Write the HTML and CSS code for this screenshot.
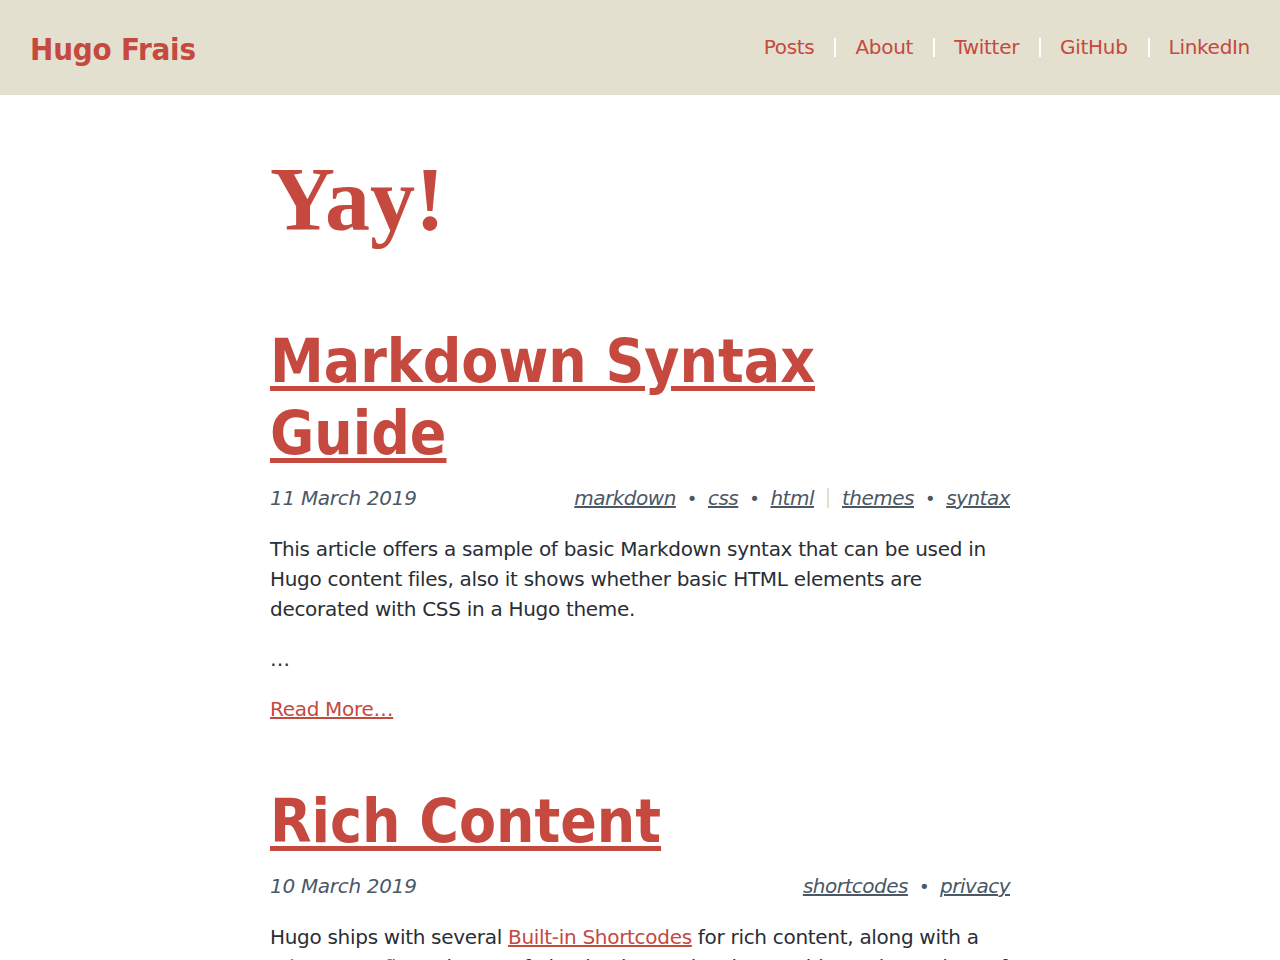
FILE: index.html
```html
<!DOCTYPE html>
<html lang="en">
<head>
<meta charset="utf-8">
<title>Hugo Frais</title>
<link rel="stylesheet" href="styles.css">
</head>
<body>
<header class="site-header">
  <a class="brand" href="#">Hugo Frais</a>
  <nav class="nav">
    <a href="#">Posts</a><span class="sep"></span>
    <a href="#">About</a><span class="sep"></span>
    <a href="#">Twitter</a><span class="sep"></span>
    <a href="#">GitHub</a><span class="sep"></span>
    <a href="#">LinkedIn</a>
  </nav>
</header>
<main class="main">
  <h1 class="page-title">Yay!</h1>

  <article class="post">
    <h2 class="post-title"><a href="#">Markdown Syntax Guide</a></h2>
    <div class="meta">
      <span class="date">11 March 2019</span>
      <span class="tags">
        <a href="#">markdown</a><span class="dot">•</span><a href="#">css</a><span class="dot">•</span><a href="#">html</a><span class="bar"></span><a href="#">themes</a><span class="dot">•</span><a href="#">syntax</a>
      </span>
    </div>
    <p>This article offers a sample of basic Markdown syntax that can be used in Hugo content files, also it shows whether basic HTML elements are decorated with CSS in a Hugo theme.</p>
    <p>…</p>
    <p><a class="more" href="#">Read More…</a></p>
  </article>

  <article class="post">
    <h2 class="post-title"><a href="#">Rich Content</a></h2>
    <div class="meta">
      <span class="date">10 March 2019</span>
      <span class="tags">
        <a href="#">shortcodes</a><span class="dot">•</span><a href="#">privacy</a>
      </span>
    </div>
    <p>Hugo ships with several <a class="inline" href="#">Built-in Shortcodes</a> for rich content, along with a <a class="inline" href="#">Privacy Config</a> and a set of Simple Shortcodes that enable static versions of various social media embeds.</p>
  </article>
</main>
</body>
</html>
```
FILE: styles.css
```css
* { box-sizing: border-box; }
html, body { margin: 0; padding: 0; background: #fff; }
body {
  font-family: "DejaVu Sans", "Liberation Sans", sans-serif;
  color: #2a2e35;
  font-size: 20px;
  line-height: 30px;
  letter-spacing: -0.3px;
}
a { color: #c5493f; }

.site-header {
  background: #e3e0cf;
  height: 95px;
  display: flex;
  align-items: flex-start;
  justify-content: space-between;
  padding: 0 30px;
}
.brand {
  font-family: "DejaVu Sans Condensed", "DejaVu Sans", sans-serif;
  font-stretch: condensed;
  font-size: 31px;
  line-height: 40px;
  font-weight: bold;
  letter-spacing: -0.2px;
  text-decoration: none;
  color: #c5493f;
  margin-top: 29px;
}
.nav {
  display: flex;
  align-items: center;
  font-size: 20px;
  line-height: 30px;
  margin-top: 32px;
}
.nav a { text-decoration: none; }
.sep {
  display: inline-block;
  width: 2px;
  height: 19px;
  background: #fff;
  margin: 0 19px 0 20px;
}

.main {
  width: 740px;
  margin: 0 auto;
  padding: 55px 0 40px;
}
.page-title {
  font-family: "Liberation Serif", "DejaVu Serif", serif;
  font-weight: bold;
  font-size: 90px;
  line-height: 100px;
  letter-spacing: 0;
  color: #c5493f;
  margin: 0 0 75px;
}
.post { margin-bottom: 61px; }
.post-title {
  font-family: "DejaVu Sans Condensed", "DejaVu Sans", sans-serif;
  font-stretch: condensed;
  font-size: 60px;
  line-height: 72px;
  letter-spacing: 0;
  margin: 0 0 14px;
  font-weight: bold;
}
.post-title a {
  text-decoration-thickness: 5px;
  text-underline-offset: 4px;
}
.meta {
  display: flex;
  justify-content: space-between;
  align-items: baseline;
  font-style: italic;
  color: #4a5866;
  margin-bottom: 20px;
}
.tags { letter-spacing: -0.5px; }
.tags a { color: #4a5866; }
.dot { margin: 0 11px; font-style: normal; font-size: 18px; }
.bar {
  display: inline-block;
  width: 2px;
  height: 20px;
  background: #e3e0cf;
  margin: 0 13px;
  vertical-align: -3px;
}
p { margin: 0 0 20px; }
p:last-child { margin-bottom: 0; }
.more, .inline { color: #c5493f; }
```
